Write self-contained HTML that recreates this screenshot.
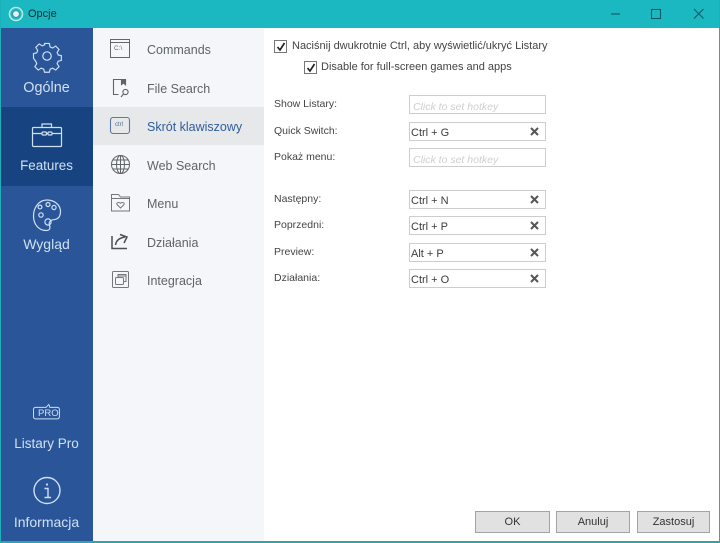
<!DOCTYPE html>
<html><head><meta charset="utf-8"><style>
html,body{margin:0;padding:0}
body{width:720px;height:543px;overflow:hidden;background:#fff;font-family:"Liberation Sans",sans-serif;position:relative}
#w{position:absolute;left:0;top:0;width:720px;height:543px;filter:blur(.3px)}
.a{position:absolute;white-space:nowrap}
.nav{color:#cfe0f3;width:93px;left:0;text-align:center}
.sub{left:147px;font-size:12.5px;color:#5f6468}
.lb{left:274px;font-size:10.5px;color:#444}
.box{left:409px;width:135px;height:17px;border:1px solid #cdcdcd;background:#fff}
.box span{position:absolute;left:1px;top:4px;font-size:11px;color:#3c3c3c}
.box i{position:absolute;left:3px;top:5px;font-size:10.5px;color:#cfcfcf}
.box svg{position:absolute;left:120px;top:4px}
.btn{top:511px;height:20px;line-height:21px;background:#e1e1e1;border:1px solid #a3a3a3;text-align:center;font-size:11px;color:#333}
.ck{width:11px;height:11px;border:1px solid #777;background:#fff}
svg{position:absolute;overflow:visible}
</style></head><body><div id="w">
<div class="a" style="left:0;top:0;width:720px;height:28px;background:#1cb8c1"></div>
<div class="a" style="left:0;top:0;width:1px;height:543px;background:#1cb0bb"></div>
<div class="a" style="right:0;top:0;width:1px;height:543px;background:#1cb0bb"></div>
<div class="a" style="left:0;top:541px;width:720px;height:2px;background:#2aa5a8"></div>
<svg style="left:8px;top:6px" width="16" height="16" fill="none"><circle cx="8" cy="8" r="6.5" stroke="#b5ecd8" stroke-width="1.6"/><circle cx="8" cy="8" r="3.4" fill="#e8f6fb" stroke="#3f8fc0"/></svg>
<div class="a" style="left:28px;top:8px;font-size:11px;color:#0a2f35">Opcje</div>
<svg style="left:600px;top:0" width="120" height="28" fill="none" stroke="#0f5a66" stroke-width="1.1"><path d="M11 14h9"/><rect x="51.500" y="9.500" width="9" height="9"/><path d="M94 9l9.500 9.500M103.500 9L94 18.500"/></svg>

<div class="a" style="left:1px;top:28px;width:92px;height:513px;background:#2a5699"></div>
<div class="a" style="left:1px;top:107px;width:92px;height:79px;background:#174480"></div>
<div class="a" style="left:93px;top:28px;width:171px;height:513px;background:#f4f6f9"></div>
<div class="a" style="left:93px;top:107px;width:171px;height:38px;background:#e6e8ea"></div>

<!-- sidebar icons -->
<svg style="left:33px;top:42px" width="28" height="28" fill="none" stroke="#cfe0f3" stroke-width="1.2"><circle cx="14" cy="14" r="4.200"/><path d="M11.500 1h5l.8 3.600 2.600 1.100 3.200-2 3.500 3.500-2 3.200 1.100 2.600 3.300.7v5l-3.300.8-1.100 2.600 2 3.100-3.500 3.500-3.200-2-2.600 1.100-.8 3.200h-5l-.8-3.200-2.600-1.100-3.200 2-3.500-3.500 2-3.100-1.100-2.600L0 16.500v-5l3.300-.7 1.100-2.600-2-3.200L5.900 1.500l3.200 2 2.600-1.100z" transform="translate(.5 .5) scale(.96)"/></svg>
<div class="a nav" style="top:80px;font-size:14.4px">Ogólne</div>
<svg style="left:32px;top:122px" width="30" height="26" fill="none" stroke="#cfe0f3" stroke-width="1.2"><rect x=".5" y="5.500" width="29" height="19" rx="1"/><path d="M10 5.500V2h9.500v3.500M.5 11.500h10M14 11.500h2M20 11.500h9.500"/><rect x="10" y="10" width="4.500" height="3" rx="1"/><rect x="16" y="10" width="4" height="3" rx="1"/></svg>
<div class="a nav" style="top:158px;font-size:13.4px">Features</div>
<svg style="left:33px;top:198px" width="28" height="34" fill="none" stroke="#cfe0f3" stroke-width="1.2"><path d="M14 2C5.500 2 .5 10 .5 18c0 8 5 14.500 12.500 14.500 4 0 4.500-2.500 3.500-5.500-1-3 1-5 4-5.300 4-.3 7-2.700 7-8.200C27.500 7.500 22 2 14 2z"/><circle cx="7" cy="9" r="1.900"/><circle cx="15" cy="6.500" r="2"/><circle cx="21" cy="9.500" r="2.100"/><circle cx="8" cy="17" r="2.200"/><circle cx="15" cy="24" r="3.100"/></svg>
<div class="a nav" style="top:236px;font-size:14px">Wygląd</div>
<svg style="left:33px;top:403px" width="28" height="18" fill="none" stroke="#cfe0f3" stroke-width="1"><path d="M2 4h11l3-3 1 3h8c1 0 2 1 2 2v8c0 1-1 2-2 2H2c-1 0-2-1-2-2V6c0-1 1-2 2-2z" transform="translate(.5 .5) scale(.96)"/></svg>
<div class="a" style="left:38px;top:408px;font-size:9.5px;color:#cfe0f3">PRO</div>
<div class="a nav" style="top:436px;font-size:13.500px">Listary Pro</div>
<svg style="left:33px;top:476px" width="28" height="29" fill="none" stroke="#cfe0f3" stroke-width="1.4"><circle cx="14" cy="14.500" r="13"/><circle cx="14" cy="8.500" r="1.100" fill="#cfe0f3" stroke="none"/><path d="M11.500 12.500H15V21M11.500 21.500h6.500"/></svg>
<div class="a nav" style="top:514px;font-size:14px">Informacja</div>

<!-- sub nav icons -->
<svg style="left:110px;top:39px" width="20" height="20" fill="none" stroke="#666" stroke-width="1"><rect x=".5" y=".5" width="19" height="18"/><path d="M.5 3.500h19"/></svg>
<div class="a" style="left:114px;top:45px;font-size:6.500px;color:#666">C:\</div>
<div class="a sub" style="top:43px">Commands</div>
<svg style="left:112px;top:79px" width="20" height="20" fill="none" stroke="#5f6468" stroke-width="1.1"><path d="M6.500 15.500H1.500V.5h12v6"/><path d="M9.500.5h4v5l-2-1.500-2 1.500z" fill="#5f6468"/><circle cx="13.500" cy="13" r="2.600"/><path d="M11.500 15l-2.500 3"/></svg>
<div class="a sub" style="top:82px">File Search</div>
<svg style="left:110px;top:117px" width="20" height="18" fill="none" stroke="#5b7ba6" stroke-width="1.1"><rect x=".5" y=".5" width="19" height="16" rx="2.500"/></svg>
<div class="a" style="left:115px;top:122px;font-size:6px;color:#4c6c9a">ctrl</div>
<div class="a sub" style="top:120px;color:#2f5d9c">Skrót klawiszowy</div>
<svg style="left:111px;top:155px" width="19" height="19" fill="none" stroke="#5f6468" stroke-width="1"><circle cx="9.500" cy="9.500" r="9"/><ellipse cx="9.500" cy="9.500" rx="4" ry="9"/><path d="M9.500.5v18M.5 9.500h18M2 5h15M2 14h15"/></svg>
<div class="a sub" style="top:159px">Web Search</div>
<svg style="left:111px;top:194px" width="19" height="18" fill="none" stroke="#777" stroke-width="1"><path d="M.5 17V.5h7l2 2.500h9v14z"/><path d="M.5 4.500h18"/><path d="M9.500 14L6 10.500c-1-1.500 1.500-3 3.500-1.200 2-1.800 4.500-.3 3.500 1.200z"/></svg>
<div class="a sub" style="top:197px">Menu</div>
<svg style="left:111px;top:232px" width="19" height="18" fill="none" stroke="#4a4f54" stroke-width="1.500"><path d="M1 4v12.500h15"/><path d="M4.500 13C5 9 8 6 14 5"/><path d="M9 2.500l7 2.500-3 6"/></svg>
<div class="a sub" style="top:236px">Działania</div>
<svg style="left:112px;top:271px" width="17" height="18" fill="none" stroke="#777" stroke-width="1"><rect x=".5" y=".5" width="16" height="16" rx="1"/><rect x="3.500" y="6.500" width="8" height="7" rx="1"/><path d="M6 6.500V3.500h8v7h-2.500M6 5h8"/></svg>
<div class="a sub" style="top:274px">Integracja</div>

<!-- content -->
<div class="a ck" style="left:274px;top:40px"></div>
<svg style="left:275px;top:41px" width="12" height="12" fill="none" stroke="#222" stroke-width="1.700"><path d="M2.500 6l2.500 3 4.500-7"/></svg>
<div class="a lb" style="left:292px;top:40px;font-size:11px">Naciśnij dwukrotnie Ctrl, aby wyświetlić/ukryć Listary</div>
<div class="a ck" style="left:304px;top:61px"></div>
<svg style="left:305px;top:62px" width="12" height="12" fill="none" stroke="#222" stroke-width="1.700"><path d="M2.500 6l2.500 3 4.500-7"/></svg>
<div class="a lb" style="left:321px;top:61px;font-size:11px">Disable for full-screen games and apps</div>

<div class="a lb" style="top:98px">Show Listary:</div>
<div class="a lb" style="top:125px">Quick Switch:</div>
<div class="a lb" style="top:151px">Pokaż menu:</div>
<div class="a lb" style="top:193px">Następny:</div>
<div class="a lb" style="top:219px">Poprzedni:</div>
<div class="a lb" style="top:246px">Preview:</div>
<div class="a lb" style="top:272px">Działania:</div>

<div class="a box" style="top:95px"><i>Click to set hotkey</i></div>
<div class="a box" style="top:122px"><span>Ctrl + G</span><svg width="9" height="9" stroke="#555" stroke-width="2"><path d="M1 1l7 7M8 1L1 8"/></svg></div>
<div class="a box" style="top:148px"><i>Click to set hotkey</i></div>
<div class="a box" style="top:190px"><span>Ctrl + N</span><svg width="9" height="9" stroke="#555" stroke-width="2"><path d="M1 1l7 7M8 1L1 8"/></svg></div>
<div class="a box" style="top:216px"><span>Ctrl + P</span><svg width="9" height="9" stroke="#555" stroke-width="2"><path d="M1 1l7 7M8 1L1 8"/></svg></div>
<div class="a box" style="top:243px"><span>Alt + P</span><svg width="9" height="9" stroke="#555" stroke-width="2"><path d="M1 1l7 7M8 1L1 8"/></svg></div>
<div class="a box" style="top:269px"><span>Ctrl + O</span><svg width="9" height="9" stroke="#555" stroke-width="2"><path d="M1 1l7 7M8 1L1 8"/></svg></div>

<div class="a btn" style="left:475px;width:73px">OK</div>
<div class="a btn" style="left:556px;width:72px">Anuluj</div>
<div class="a btn" style="left:637px;width:71px">Zastosuj</div>
</div></body></html>
